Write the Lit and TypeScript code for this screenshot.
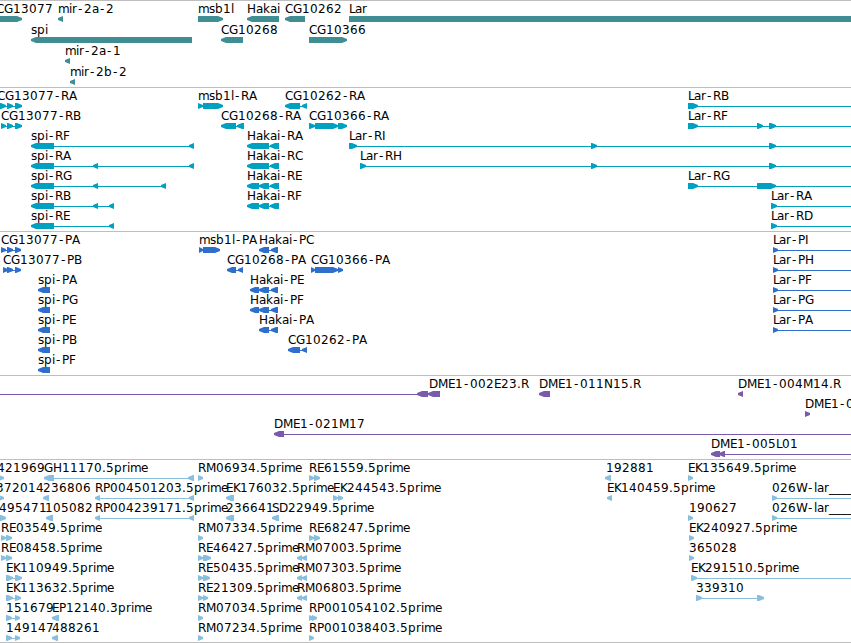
import { LitElement, html, svg, css } from 'lit';
import { customElement, property } from 'lit/decorators.js';

type Block = [number, number];

interface Feature {
  row: number;
  label: string;
  x: number;
  dir: 'L' | 'R';
  blocks: Block[];
}

interface Track {
  name: string;
  height: number;
  rowHeight: number;
  features: Feature[];
}

const WIDTH = 851;
// blocks past the visible range keep the connecting lines running to the edge
const BEFORE: Block = [-40, -30];
const AFTER: Block = [900, 910];

const f = (row: number, label: string, x: number, dir: 'L' | 'R', ...blocks: Block[]): Feature => ({
  row, label, x, dir, blocks,
});

// label cell widths in pixels, digits are 8
const ADVANCE: Record<string, number> = {
  C: 8, G: 9, R: 8, P: 7, A: 8, B: 7, E: 7, F: 7, H: 9, I: 3, L: 6, D: 9, M: 10, N: 9,
  K: 7, S: 7, W: 11, a: 7, b: 8, e: 7, i: 3, k: 7, l: 3, m: 11, p: 8, r: 5, s: 6,
  '-': 7, '.': 4, '_': 6,
};

const glyphPositions = (text: string, x: number) => {
  const out: number[] = [];
  let pos = x;
  for (const ch of text) {
    out.push(ch === '-' ? pos + 1 : pos);
    pos += ADVANCE[ch] ?? 8;
  }
  return out.join(' ');
};

const TRACKS: Track[] = [
  {
    name: 'gene',
    height: 87,
    rowHeight: 21,
    features: [
      f(0, 'CG13077', -4, 'R', [-4, 22]),
      f(0, 'mir-2a-2', 58, 'L', [58, 63]),
      f(0, 'msb1l', 198, 'R', [198, 223]),
      f(0, 'Hakai', 247, 'L', [247, 279]),
      f(0, 'CG10262', 285, 'L', [285, 305]),
      f(0, 'Lar', 349, 'R', [349, 900]),
      f(1, 'spi', 31, 'L', [31, 192]),
      f(1, 'CG10268', 221, 'L', [221, 243]),
      f(1, 'CG10366', 309, 'R', [309, 347]),
      f(2, 'mir-2a-1', 65, 'L', [65, 70]),
      f(3, 'mir-2b-2', 70, 'L', [70, 75]),
    ],
  },
  {
    name: 'transcript',
    height: 144,
    rowHeight: 20,
    features: [
      f(0, 'CG13077-RA', -3, 'R', [-3, 6], [7, 13], [15, 22]),
      f(0, 'msb1l-RA', 198, 'R', [198, 203], [203, 223]),
      f(0, 'CG10262-RA', 285, 'L', [285, 300], [302, 307]),
      f(0, 'Lar-RB', 688, 'R', [688, 698], AFTER),
      f(1, 'CG13077-RB', 1, 'R', [1, 6], [7, 13], [15, 22]),
      f(1, 'CG10268-RA', 221, 'L', [221, 236], [237, 244]),
      f(1, 'CG10366-RA', 309, 'R', [309, 315], [315, 338], [338, 347]),
      f(1, 'Lar-RF', 688, 'R', [688, 698], [757, 763], [769, 776], AFTER),
      f(2, 'spi-RF', 31, 'L', [31, 54], [189, 194]),
      f(2, 'Hakai-RA', 247, 'L', [247, 269], [270, 279]),
      f(2, 'Lar-RI', 349, 'R', [349, 357], [591, 597], [769, 776], AFTER),
      f(3, 'spi-RA', 31, 'L', [31, 54], [93, 98], [189, 194]),
      f(3, 'Hakai-RC', 247, 'L', [247, 269], [270, 279]),
      f(3, 'Lar-RH', 360, 'R', [360, 366], [591, 597], [769, 776], AFTER),
      f(4, 'spi-RG', 31, 'L', [31, 54], [93, 98], [161, 166]),
      f(4, 'Hakai-RE', 247, 'L', [247, 259], [259, 269], [270, 279]),
      f(4, 'Lar-RG', 688, 'R', [688, 698], [757, 776], AFTER),
      f(5, 'spi-RB', 31, 'L', [31, 54], [93, 98], [109, 114]),
      f(5, 'Hakai-RF', 247, 'L', [247, 259], [259, 269], [270, 279]),
      f(5, 'Lar-RA', 771, 'R', [771, 777], AFTER),
      f(6, 'spi-RE', 31, 'L', [31, 54], [109, 114]),
      f(6, 'Lar-RD', 771, 'R', [771, 777], AFTER),
    ],
  },
  {
    name: 'protein',
    height: 144,
    rowHeight: 20,
    features: [
      f(0, 'CG13077-PA', 1, 'R', [1, 6], [7, 13], [15, 21]),
      f(0, 'msb1l-PA', 199, 'R', [199, 203], [203, 220]),
      f(0, 'Hakai-PC', 259, 'L', [259, 269], [271, 278]),
      f(0, 'Lar-PI', 773, 'R', [773, 778], AFTER),
      f(1, 'CG13077-PB', 3, 'R', [3, 8], [7, 13], [15, 21]),
      f(1, 'CG10268-PA', 227, 'L', [227, 236], [238, 243]),
      f(1, 'CG10366-PA', 311, 'R', [311, 315], [315, 338], [338, 343]),
      f(1, 'Lar-PH', 773, 'R', [773, 778], AFTER),
      f(2, 'spi-PA', 38, 'L', [38, 50]),
      f(2, 'Hakai-PE', 250, 'L', [250, 259], [259, 269], [271, 278]),
      f(2, 'Lar-PF', 773, 'R', [773, 778], AFTER),
      f(3, 'spi-PG', 38, 'L', [38, 50]),
      f(3, 'Hakai-PF', 250, 'L', [250, 259], [259, 269], [271, 278]),
      f(3, 'Lar-PG', 773, 'R', [773, 778], AFTER),
      f(4, 'spi-PE', 38, 'L', [38, 50]),
      f(4, 'Hakai-PA', 259, 'L', [259, 269], [271, 278]),
      f(4, 'Lar-PA', 773, 'R', [773, 778], AFTER),
      f(5, 'spi-PB', 38, 'L', [38, 50]),
      f(5, 'CG10262-PA', 288, 'L', [288, 300], [302, 307]),
      f(6, 'spi-PF', 38, 'L', [38, 50]),
    ],
  },
  {
    name: 'clone',
    height: 84,
    rowHeight: 20,
    features: [
      f(0, '', 0, 'L', BEFORE, [417, 428]),
      f(0, 'DME1-002E23.R', 429, 'L', [428, 440]),
      f(0, 'DME1-011N15.R', 539, 'L', [539, 550]),
      f(0, 'DME1-004M14.R', 738, 'L', [738, 743]),
      f(1, 'DME1-0', 805, 'R', [805, 810]),
      f(2, 'DME1-021M17', 274, 'L', [274, 284], AFTER),
      f(3, 'DME1-005L01', 711, 'L', [711, 720], [719, 725], AFTER),
    ],
  },
  {
    name: 'est',
    height: 183,
    rowHeight: 20,
    features: [
      f(0, '421969', -3, 'R', [-3, 4]),
      f(0, 'GH11170.5prime', 44, 'L', [44, 54], [188, 194]),
      f(0, 'RM06934.5prime', 198, 'R', [198, 203]),
      f(0, 'RE61559.5prime', 309, 'R', [309, 314], [314, 320]),
      f(0, '192881', 606, 'L', [605, 611]),
      f(0, 'EK135649.5prime', 688, 'R', [688, 693]),
      f(1, '372014', -4, 'R', [-4, 4]),
      f(1, '236806', 43, 'L', [43, 49]),
      f(1, 'RP004501203.5prime', 95, 'L', [95, 100], [189, 194]),
      f(1, 'EK176032.5prime', 226, 'L', [226, 234]),
      f(1, 'EK244543.5prime', 333, 'R', [333, 338], [338, 343]),
      f(1, 'EK140459.5prime', 607, 'L', [607, 612]),
      f(1, '026W-lar____', 772, 'R', [772, 777], AFTER),
      f(2, '495471', -1, 'R', [-1, 6]),
      f(2, '105082', 45, 'L', [46, 53]),
      f(2, 'RP004239171.5prime', 95, 'L', [95, 100], [189, 194]),
      f(2, '236641', 226, 'L', [226, 234]),
      f(2, 'SD22949.5prime', 272, 'L', [272, 279]),
      f(2, '190627', 689, 'R', [688, 693]),
      f(2, '026W-lar____', 772, 'R', [772, 777], AFTER),
      f(3, 'RE03549.5prime', 1, 'R', [1, 6], [6, 12]),
      f(3, 'RM07334.5prime', 198, 'R', [198, 203]),
      f(3, 'RE68247.5prime', 309, 'R', [309, 314], [314, 320]),
      f(3, 'EK240927.5prime', 689, 'R', [689, 694]),
      f(4, 'RE08458.5prime', 1, 'R', [1, 6], [6, 12]),
      f(4, 'RE46427.5prime', 198, 'R', [198, 203], [203, 211]),
      f(4, 'RM07003.5prime', 297, 'L', [297, 302], [302, 307]),
      f(4, '365028', 689, 'R', [689, 694]),
      f(5, 'EK110949.5prime', 6, 'R', [6, 13], [15, 22]),
      f(5, 'RE50435.5prime', 198, 'R', [198, 203], [203, 210]),
      f(5, 'RM07303.5prime', 297, 'L', [297, 302], [302, 307]),
      f(5, 'EK291510.5prime', 691, 'R', [691, 697], AFTER),
      f(6, 'EK113632.5prime', 6, 'R', [6, 13], [15, 21]),
      f(6, 'RE21309.5prime', 198, 'R', [198, 203], [203, 208]),
      f(6, 'RM06803.5prime', 297, 'L', [297, 302], [302, 307]),
      f(6, '339310', 696, 'R', [696, 702], [757, 764]),
      f(7, '151679', 6, 'R', [6, 12], [15, 20]),
      f(7, 'EP12140.3prime', 52, 'L', [52, 59]),
      f(7, 'RM07034.5prime', 198, 'R', [198, 203]),
      f(7, 'RP001054102.5prime', 309, 'R', [309, 314], [312, 317]),
      f(8, '149147', 6, 'R', [6, 12], [15, 20]),
      f(8, '488261', 52, 'L', [52, 58]),
      f(8, 'RM07234.5prime', 198, 'R', [198, 203]),
      f(8, 'RP001038403.5prime', 309, 'R', [309, 314]),
    ],
  },
];

@customElement('genome-track')
export class GenomeTrack extends LitElement {
  @property({ attribute: false }) track!: Track;

  static styles = css`
    :host {
      display: block;
      border-top: 1px solid #bebebe;
      box-sizing: border-box;
      overflow: hidden;
    }

    svg {
      display: block;
    }

    text {
      font: 12px 'DejaVu Sans', sans-serif;
      fill: #000;
      white-space: pre;
    }

    .gene {
      fill: #408e94;
    }

    .transcript {
      fill: #00a0c0;
    }

    .protein {
      fill: #306ecc;
    }

    .clone {
      fill: #7a5aaa;
    }

    .est {
      fill: #88bede;
    }
  `;

  render() {
    const { name, height, features } = this.track;
    return html`
      <svg width=${WIDTH} height=${height - 1}>
        <g class=${name}>${features.map((item) => this.renderShape(item))}</g>
        <g>${features.filter((item) => item.label).map((item) => this.renderLabel(item))}</g>
      </svg>
    `;
  }

  private renderLabel(item: Feature) {
    const y = item.row * this.track.rowHeight + 12;
    return svg`<text x=${glyphPositions(item.label, item.x)} y=${y}>${item.label}</text>`;
  }

  private renderShape(item: Feature) {
    const y = item.row * this.track.rowHeight + 15;
    const start = item.blocks[0][0];
    const end = item.blocks[item.blocks.length - 1][1];
    return svg`
      ${item.blocks.length > 1
        ? svg`<rect x=${start + 1} y=${y + 3} width=${end - start - 2} height="1"></rect>`
        : ''}
      ${item.blocks.map((block) => svg`<polygon points=${this.arrow(block, y, item.dir)}></polygon>`)}
    `;
  }

  // blunt-tipped arrow, six pixels tall
  private arrow([a, b]: Block, y: number, dir: 'L' | 'R') {
    const head = Math.min(5, b - a);
    const [tip, neck, tail] = dir === 'L' ? [a, a + head, b] : [b, b - head, a];
    return `${tip},${y + 2} ${neck},${y} ${tail},${y} ${tail},${y + 6} ${neck},${y + 6} ${tip},${y + 4}`;
  }
}

@customElement('app-root')
export class AppRoot extends LitElement {
  static styles = css`
    :host {
      display: flex;
      flex-direction: column;
      width: 851px;
      height: 643px;
      background: #fff;
      overflow: hidden;
      box-sizing: border-box;
      border-bottom: 1px solid #bebebe;
    }
  `;

  render() {
    return html`${TRACKS.map((track) => html`<genome-track .track=${track}></genome-track>`)}`;
  }
}
